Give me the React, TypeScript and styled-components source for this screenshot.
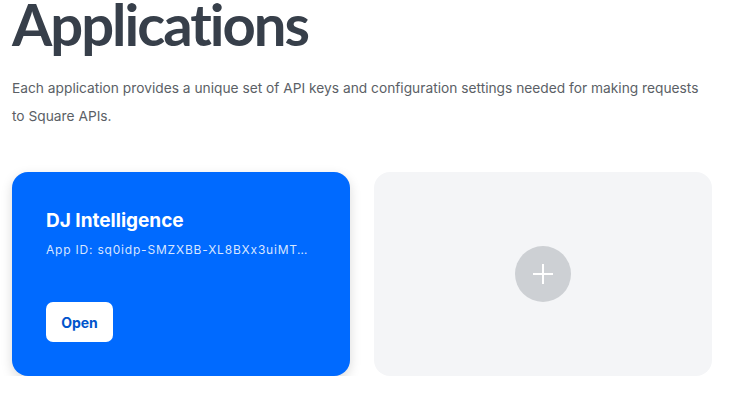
import React from 'react';
import styled, { createGlobalStyle } from 'styled-components';

const GlobalStyle = createGlobalStyle`
  body {
    margin: 0;
    background: #ffffff;
    font-family: Inter, "Noto Sans", sans-serif;
  }
`

const apps = [
  { name: 'DJ Intelligence', id: 'sq0idp-SMZXBB-XL8BXx3uiMTqQv2' },
];

const App: React.FC = () => {
  return (
    <Page>
      <GlobalStyle />
      <Title>Applications</Title>
      <Intro>
        Each application provides a unique set of API keys and configuration settings needed for making requests
        to Square APIs.
      </Intro>
      <CardGrid>
        {apps.map(app => (
          <AppCard key={app.id}>
            <div>
              <AppName>{app.name}</AppName>
              <AppId>App ID: {app.id}</AppId>
            </div>
            <OpenButton type="button">Open</OpenButton>
          </AppCard>
        ))}
        <AddCard>
          <AddCircle>
            <svg width="22" height="22" viewBox="0 0 22 22">
              <path d="M11 1v20M1 11h20" stroke="#ffffff" strokeWidth="2" fill="none" />
            </svg>
          </AddCircle>
        </AddCard>
      </CardGrid>
    </Page>
  );
}

export default App;

const Page = styled.div`
  padding: 0 12px;
`
const Title = styled.h1`
  margin: 0;
  font-family: Lato, Inter, sans-serif;
  font-size: 58px;
  line-height: 48px;
  font-weight: 700;
  letter-spacing: -2px;
  color: #373f4a;
`
const Intro = styled.p`
  margin: 26px 0 0;
  width: 695px;
  font-size: 13.75px;
  line-height: 28px;
  color: #5b5f66;
`
const CardGrid = styled.div`
  display: grid;
  grid-template-columns: 338px 338px;
  gap: 24px;
  margin-top: 42px;
`
const AppCard = styled.div`
  height: 204px;
  box-sizing: border-box;
  padding: 38px 34px 34px;
  border-radius: 16px;
  background: #006aff;
  box-shadow: 0 4px 12px rgba(0, 0, 0, 0.15);
  display: flex;
  flex-direction: column;
  justify-content: space-between;
  align-items: flex-start;
`
const AppName = styled.div`
  font-size: 19px;
  line-height: 22px;
  font-weight: 700;
  color: #ffffff;
`
const AppId = styled.div`
  margin-top: 10px;
  max-width: 262px;
  font-size: 12px;
  line-height: 16px;
  letter-spacing: 0.8px;
  color: rgba(255, 255, 255, 0.85);
  white-space: nowrap;
  overflow: hidden;
  text-overflow: ellipsis;
`
const OpenButton = styled.button`
  width: 67px;
  height: 40px;
  border: none;
  border-radius: 7px;
  background: #ffffff;
  color: #0055cc;
  font-family: inherit;
  font-size: 14px;
  font-weight: 700;
  cursor: pointer;
`
const AddCard = styled.div`
  height: 204px;
  border-radius: 16px;
  background: #f4f5f7;
  display: flex;
  align-items: center;
  justify-content: center;
`
const AddCircle = styled.div`
  width: 56px;
  height: 56px;
  border-radius: 50%;
  background: #cdd0d4;
  display: flex;
  align-items: center;
  justify-content: center;
`
